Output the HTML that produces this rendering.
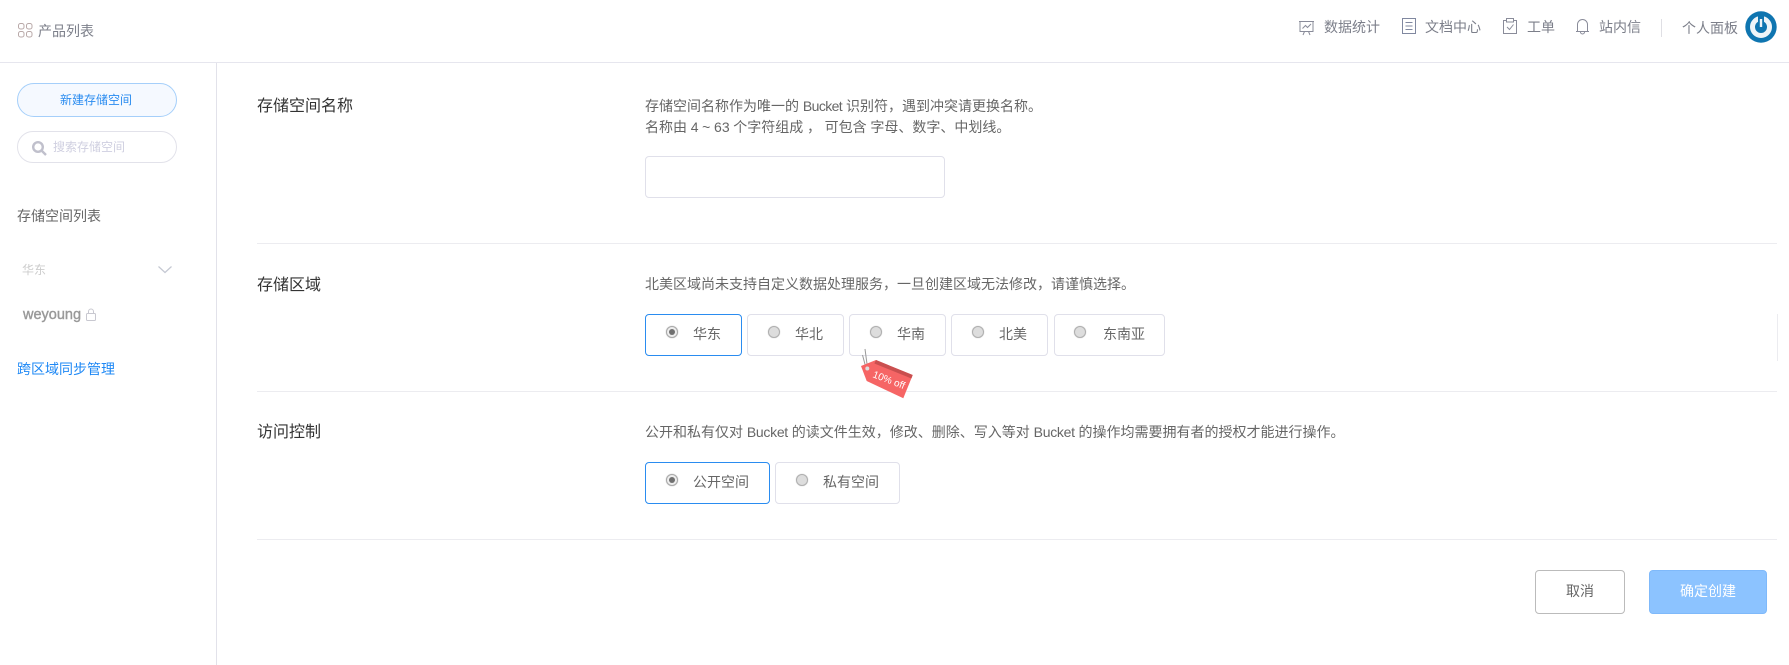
<!DOCTYPE html>
<html lang="zh"><head><meta charset="utf-8"><title>新建存储空间</title>
<style>
html,body{margin:0;padding:0;width:1789px;height:665px;overflow:hidden;background:#fff}
body{position:relative;font-family:"Liberation Sans","Noto Sans CJK SC",sans-serif;font-size:14px;color:#666}
.t{position:absolute;white-space:nowrap;line-height:20px}
.b{position:absolute;box-sizing:border-box;background:#fff;border:1px solid #e0e0ea;border-radius:4px}
.on{border-color:#2a8cf0}
.l{position:absolute;background:#ececf0}
.lab{font-size:16px;color:#333;left:257px}
.r{position:absolute;width:12px;height:12px;border-radius:50%;box-sizing:border-box;background:#ddd;border:1px solid #b0b0b0;box-shadow:0 0 1px #bbb}
.r.c{background:#eee;border:1px solid #aaa;box-shadow:0 0 1px #aaa}
.r.c:after{content:"";position:absolute;left:2px;top:2px;width:6px;height:6px;background:#707070;border-radius:50%}
.k{letter-spacing:-.6px}
.k2{letter-spacing:-.3px}
svg{position:absolute;overflow:visible}
</style></head><body>
<div class="l" style="left:0;top:62px;width:1789px;height:1px;background:#e6e6ee"></div>
<div class="l" style="left:216px;top:63px;width:1px;height:602px;background:#e2e2ea"></div>

<svg style="left:18px;top:23px" width="15" height="15" fill="none" stroke="#b9a9a8" stroke-width="1"><rect x=".5" y=".5" width="5.5" height="5.5" rx="2"/><rect x="8.5" y=".5" width="5.5" height="5.5" rx="2"/><rect x=".5" y="8.500" width="5.500" height="5.500" rx="2"/><rect x="8.500" y="8.500" width="5.500" height="5.500" rx="2"/></svg>
<div class="t" style="left:38px;top:21px;color:#7c7f8a">产品列表</div>

<svg style="left:1299px;top:20px" width="15" height="16" fill="none" stroke="#8a8c9a"><path d="M0 1.500h15M1 1.500v10h13v-10M3.500 8.500l3-3 2 2 3.500-3.500M5.500 11.500l-1.500 3.500M9.500 11.500l1.500 3.500"/></svg>
<div class="t" style="left:1324px;top:17px;color:#7c7f8a">数据统计</div>
<svg style="left:1402px;top:18px" width="14" height="16" fill="none" stroke="#8088a0"><path d="M.5.500h13v15H.5zM3.500 4.500h7M3.500 8h7M3.500 11.500h7"/></svg>
<div class="t" style="left:1425px;top:17px;color:#7c7f8a">文档中心</div>
<svg style="left:1503px;top:18px" width="14" height="16" fill="none" stroke="#8a8c9a"><path d="M3.500 2.500h-3v13h13v-13h-3M3.500.500h7v3.500h-7zM4 9l2.500 2.500 4-5"/></svg>
<div class="t" style="left:1527px;top:17px;color:#7c7f8a">工单</div>
<svg style="left:1576px;top:19px" width="13" height="16" fill="none" stroke="#8a8c9a"><path d="M0 12.500h13M1.500 12.500V5.500a5 5 0 0 1 10 0v7M4.500 13a2 2 0 0 0 4 0"/></svg>
<div class="t" style="left:1599px;top:17px;color:#7c7f8a">站内信</div>
<div class="l" style="left:1661px;top:19px;width:1px;height:18px;background:#dfdfe4"></div>
<div class="t" style="left:1682px;top:18px;color:#7c7f8a">个人面板</div>
<svg style="left:1745px;top:11px" width="32" height="32" fill="none"><circle cx="16" cy="16" r="15.700" fill="#0f75b0"/><circle cx="16" cy="16" r="8.500" stroke="#eef4f8" stroke-width="5"/><path d="M16 5v10" stroke="#0f75b0" stroke-width="6"/><path d="M16 8v8" stroke="#eef4f8" stroke-width="2.400"/></svg>

<div class="b" style="left:17px;top:83px;width:160px;height:34px;border-radius:17px;background:#f5f9ff;border-color:#a5cffa"></div>
<div class="t" style="left:60px;top:90px;font-size:12px;color:#2a8cf0">新建存储空间</div>
<div class="b" style="left:17px;top:131px;width:160px;height:32px;border-radius:16px;border-color:#e2e2ea"></div>
<svg style="left:32px;top:141px" width="15" height="15" fill="none" stroke="#c0c0cc" stroke-width="2.400"><circle cx="6" cy="6" r="4.800"/><path d="M9.500 9.500l4.500 4.500"/></svg>
<div class="t" style="left:53px;top:137px;font-size:12px;color:#cfcfe0">搜索存储空间</div>
<div class="t" style="left:17px;top:206px">存储空间列表</div>
<div class="t" style="left:22px;top:260px;font-size:12px;color:#ccc">华东</div>
<svg style="left:158px;top:266px" width="14" height="8" fill="none" stroke="#c4c8d2" stroke-width="1.200"><path d="M.5.500l6.500 6 6.500-6"/></svg>
<div class="t" style="left:23px;top:305px;color:#999;font-size:14.500px;-webkit-text-stroke:.4px #999">weyoung</div>
<svg style="left:86px;top:308px" width="11" height="13" fill="none" stroke="#c8c8d0"><rect x=".5" y="5.500" width="9" height="7" rx="1"/><path d="M2.500 5.500V3.500a2.500 2.500 0 0 1 5 0v2"/></svg>
<div class="t" style="left:17px;top:359px;color:#1e88f5">跨区域同步管理</div>

<div class="t lab" style="top:97px">存储空间名称</div>
<div class="t" style="left:645px;top:96px">存储空间名称作为唯一的 <span class="k">Bucket</span> 识别符，遇到冲突请更换名称。</div>
<div class="t" style="left:645px;top:117px;word-spacing:-.2px">名称由 4 ~ 63 个字符组成 ， 可包含 字母、数字、中划线。</div>
<div class="b" style="left:645px;top:156px;width:300px;height:42px"></div>
<div class="l" style="left:257px;top:243px;width:1520px;height:1px"></div>

<div class="t lab" style="top:276px">存储区域</div>
<div class="t" style="left:645px;top:274px">北美区域尚未支持自定义数据处理服务，一旦创建区域无法修改，请谨慎选择。</div>
<div class="b on" style="left:645px;top:314px;width:97px;height:42px"></div><div class="r c" style="left:666px;top:326px"></div><div class="t" style="left:693px;top:324px">华东</div>
<div class="b" style="left:747px;top:314px;width:97px;height:42px"></div><div class="r" style="left:768px;top:326px"></div><div class="t" style="left:795px;top:324px">华北</div>
<div class="b" style="left:849px;top:314px;width:97px;height:42px"></div><div class="r" style="left:870px;top:326px"></div><div class="t" style="left:897px;top:324px">华南</div>
<div class="b" style="left:951px;top:314px;width:97px;height:42px"></div><div class="r" style="left:972px;top:326px"></div><div class="t" style="left:999px;top:324px">北美</div>
<div class="b" style="left:1054px;top:314px;width:111px;height:42px"></div><div class="r" style="left:1074px;top:326px"></div><div class="t" style="left:1103px;top:324px">东南亚</div>
<div class="l" style="left:1777px;top:314px;width:1px;height:47px"></div>
<div class="l" style="left:257px;top:391px;width:1520px;height:1px"></div>
<svg style="left:0;top:0" width="1789" height="665">
<path d="M865 349l2 15M862.500 355l3.500 13" stroke="#999" fill="none"/>
<path d="M861 366l15-6 36.700 15-9.400 23.300L866.700 381z" fill="#f66565"/>
<path d="M876 360l36.700 15-1.300 3.500-37-15z" fill="#c94f4f"/>
<circle cx="867.300" cy="368.500" r="2" fill="#ddd"/>
<text x="872" y="377" fill="#fff" transform="rotate(21 872 377)" style="font-family:'Liberation Sans',sans-serif;font-size:10px">10% off</text>
</svg>

<div class="t lab" style="top:423px">访问控制</div>
<div class="t" style="left:645px;top:422px">公开和私有仅对 <span class="k2">Bucket</span> 的读文件生效，修改、删除、写入等对 <span class="k2">Bucket</span> 的操作均需要拥有者的授权才能进行操作。</div>
<div class="b on" style="left:645px;top:462px;width:125px;height:42px"></div><div class="r c" style="left:666px;top:474px"></div><div class="t" style="left:693px;top:472px">公开空间</div>
<div class="b" style="left:775px;top:462px;width:125px;height:42px"></div><div class="r" style="left:796px;top:474px"></div><div class="t" style="left:823px;top:472px">私有空间</div>
<div class="l" style="left:257px;top:539px;width:1520px;height:1px"></div>

<div class="b" style="left:1535px;top:570px;width:90px;height:44px;border-color:#bbb"></div>
<div class="t" style="left:1566px;top:581px">取消</div>
<div class="b" style="left:1649px;top:570px;width:118px;height:44px;background:#8cc3ff;border-color:#7fb9fa"></div>
<div class="t" style="left:1680px;top:581px;color:#fff">确定创建</div>
</body></html>
